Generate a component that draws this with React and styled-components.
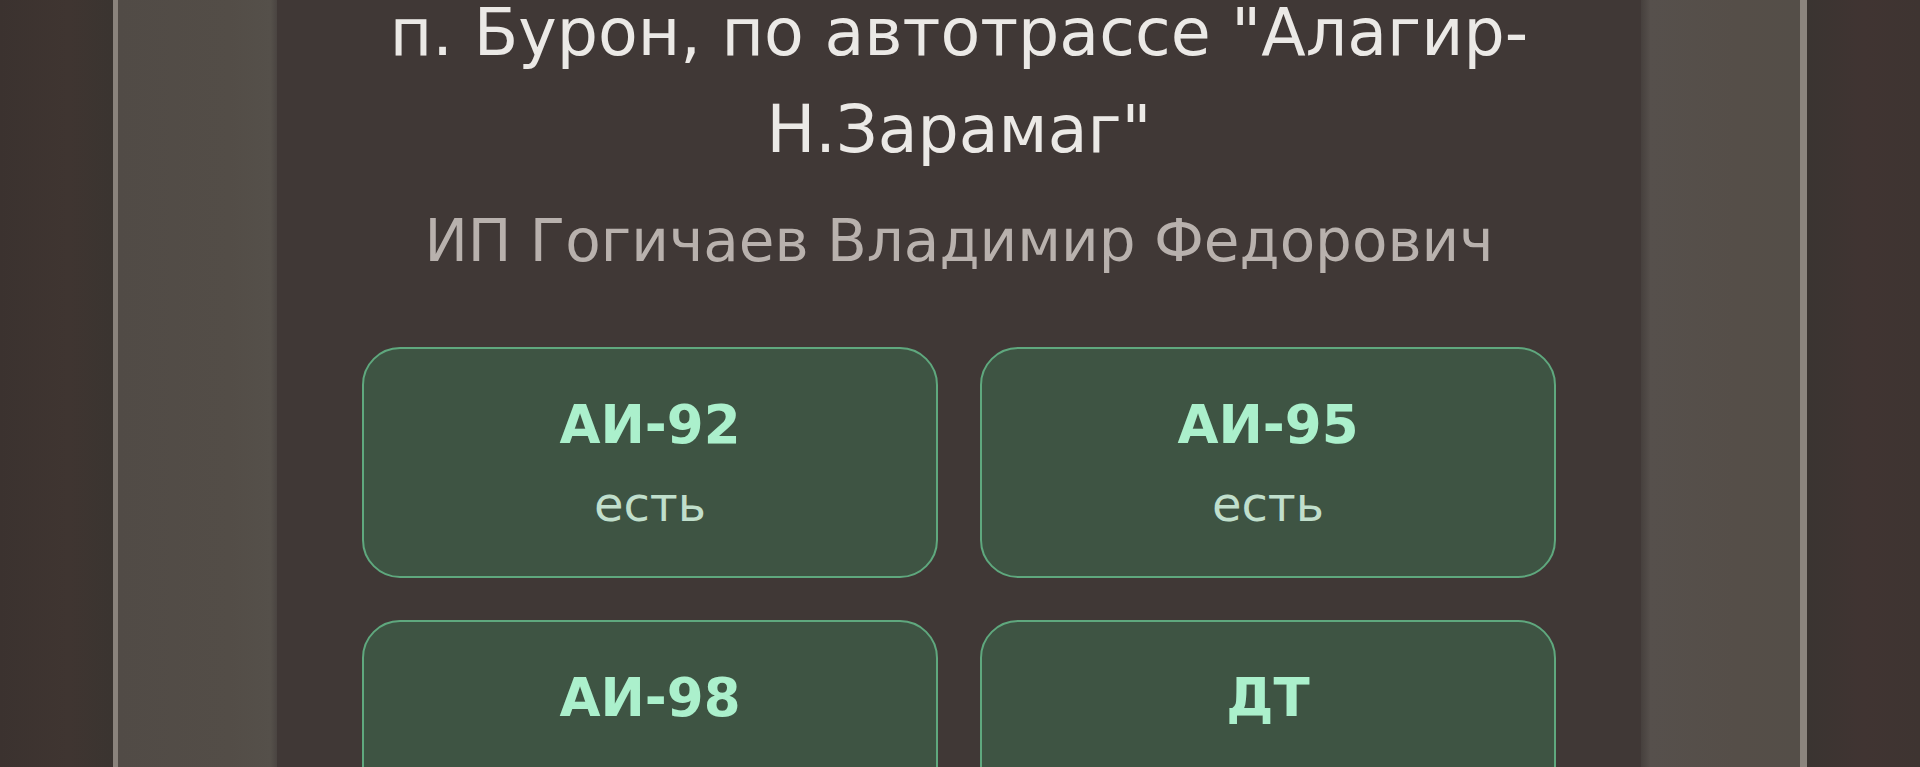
import React from "react";
import styled, { createGlobalStyle } from "styled-components";

const GlobalStyle = createGlobalStyle`
  html, body {
    margin: 0;
    padding: 0;
    background: #3d3430;
  }
  body {
    font-family: "DejaVu Sans", "Noto Sans", sans-serif;
  }
`;

const Scene = styled.div`
  display: flex;
  height: 767px;
  overflow: hidden;
`;

const OuterShade = styled.div`
  flex: 0 0 113px;
  background: ${(p) =>
    p.$side === "left"
      ? "linear-gradient(90deg, #3b322f 0%, #3f3531 60%, #3a3430 100%)"
      : "linear-gradient(90deg, #3a3431 0%, #403432 50%, #3e3431 100%)"};
`;

const Bezel = styled.div`
  flex: 0 0 ${(p) => (p.$side === "left" ? "164px" : "166px")};
  box-sizing: border-box;
  background: ${(p) =>
    p.$side === "left"
      ? "linear-gradient(90deg, #514b46 0%, #534d47 70%, #55504a 96%, #4a4441 100%)"
      : "linear-gradient(90deg, #46403d 0%, #56504c 6%, #554e48 60%, #544e48 100%)"};
  ${(p) =>
    p.$side === "left"
      ? "border-left: 5px solid #8a837c;"
      : "border-right: 7px solid #8c857e;"}
`;

const Screen = styled.main`
  flex: 1 1 auto;
  background: #403836;
  display: flex;
  flex-direction: column;
  align-items: center;
  padding: 0 60px;
  overflow: hidden;
`;

const Title = styled.h1`
  margin: -16px 0 0;
  font-weight: 400;
  font-size: 65px;
  line-height: 97px;
  color: #ebe9e6;
  text-align: center;
`;

const Owner = styled.p`
  margin: 28px 0 0;
  font-size: 58px;
  line-height: 70px;
  color: #b8b1ad;
  text-align: center;
`;

const FuelGrid = styled.section`
  margin-top: 71px;
  display: grid;
  grid-template-columns: repeat(2, 576px);
  grid-auto-rows: 231px;
  gap: 42px;
`;

const FuelCard = styled.div`
  box-sizing: border-box;
  border: 2px solid #5fa87e;
  border-radius: 38px;
  background: #3e5443;
  display: flex;
  flex-direction: column;
  align-items: center;
  justify-content: center;
  gap: 20px;
`;

const FuelName = styled.div`
  font-weight: 700;
  font-size: 53px;
  line-height: 62px;
  color: #abf0cc;
`;

const FuelStatus = styled.div`
  font-size: 48px;
  line-height: 56px;
  color: #c0dfcc;
`;

const fuels = [
  { name: "АИ-92", status: "есть" },
  { name: "АИ-95", status: "есть" },
  { name: "АИ-98", status: "есть" },
  { name: "ДТ", status: "есть" },
];

export default function App() {
  return (
    <>
      <GlobalStyle />
      <Scene>
        <OuterShade $side="left" />
        <Bezel $side="left" />
        <Screen>
          <Title>п. Бурон, по автотрассе "Алагир-Н.Зарамаг"</Title>
          <Owner>ИП Гогичаев Владимир Федорович</Owner>
          <FuelGrid>
            {fuels.map((f) => (
              <FuelCard key={f.name}>
                <FuelName>{f.name}</FuelName>
                <FuelStatus>{f.status}</FuelStatus>
              </FuelCard>
            ))}
          </FuelGrid>
        </Screen>
        <Bezel $side="right" />
        <OuterShade $side="right" />
      </Scene>
    </>
  );
}
